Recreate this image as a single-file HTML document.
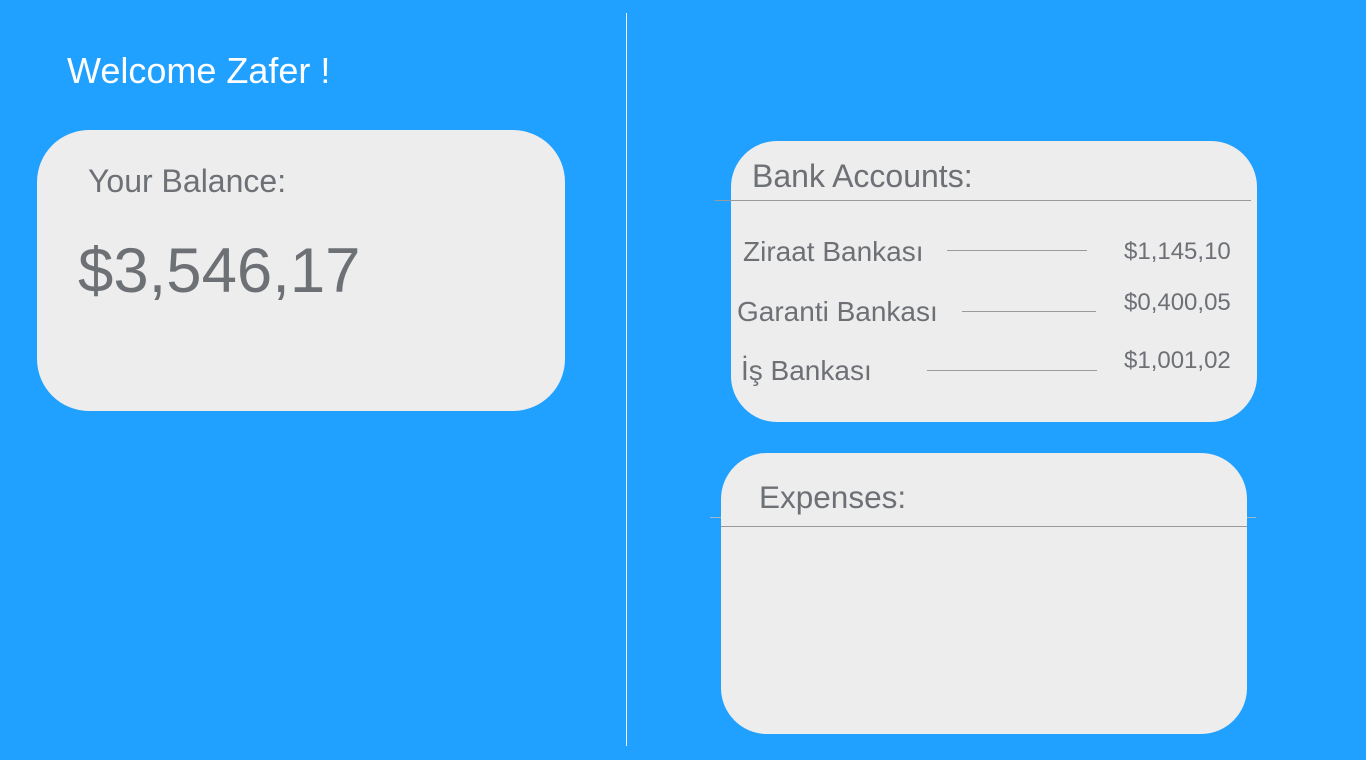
<!DOCTYPE html>
<html><head><style>
body{margin:0;width:1366px;height:760px;background:#20a0ff;position:relative;overflow:hidden;font-family:"Liberation Sans",sans-serif}
div,span{position:absolute}
.t{line-height:1;white-space:nowrap;color:#6d7075}
.card{background:#ededed}
.ln{height:1px;background:#9a9a9a}
</style></head><body>
<div style="left:626px;top:13px;width:1px;height:733px;background:#fff"></div>
<div class="t" style="left:67px;top:53px;font-size:36px;color:#fff">Welcome Zafer !</div>
<div class="card" style="left:37px;top:130px;width:528px;height:281px;border-radius:52px"></div>
<div class="t" style="left:88px;top:165px;font-size:32px">Your Balance:</div>
<div class="t" style="left:78px;top:240px;font-size:63.5px">$3,546,17</div>

<div class="card" style="left:731px;top:141px;width:526px;height:281px;border-radius:46px"></div>
<div class="t" style="left:752px;top:160px;font-size:32px">Bank Accounts:</div>
<div class="ln" style="left:715px;top:200px;width:536px"></div>
<div class="t" style="left:743px;top:238px;font-size:28px">Ziraat Bankası</div>
<div class="ln" style="left:947px;top:250px;width:140px"></div>
<div class="t" style="left:1124px;top:240px;font-size:24px">$1,145,10</div>
<div class="t" style="left:737px;top:298px;font-size:28px">Garanti Bankası</div>
<div class="ln" style="left:962px;top:311px;width:134px"></div>
<div class="t" style="left:1124px;top:291px;font-size:24px">$0,400,05</div>
<div class="t" style="left:741px;top:357px;font-size:28px">İş Bankası</div>
<div class="ln" style="left:927px;top:370px;width:170px"></div>
<div class="t" style="left:1124px;top:349px;font-size:24px">$1,001,02</div>

<div class="ln" style="left:710px;top:517px;width:546px;background:#9fb8cc"></div>
<div class="card" style="left:721px;top:453px;width:526px;height:281px;border-radius:46px"></div>
<div class="t" style="left:759px;top:482px;font-size:31.5px">Expenses:</div>
<div class="ln" style="left:721px;top:526px;width:526px"></div>
</body></html>
